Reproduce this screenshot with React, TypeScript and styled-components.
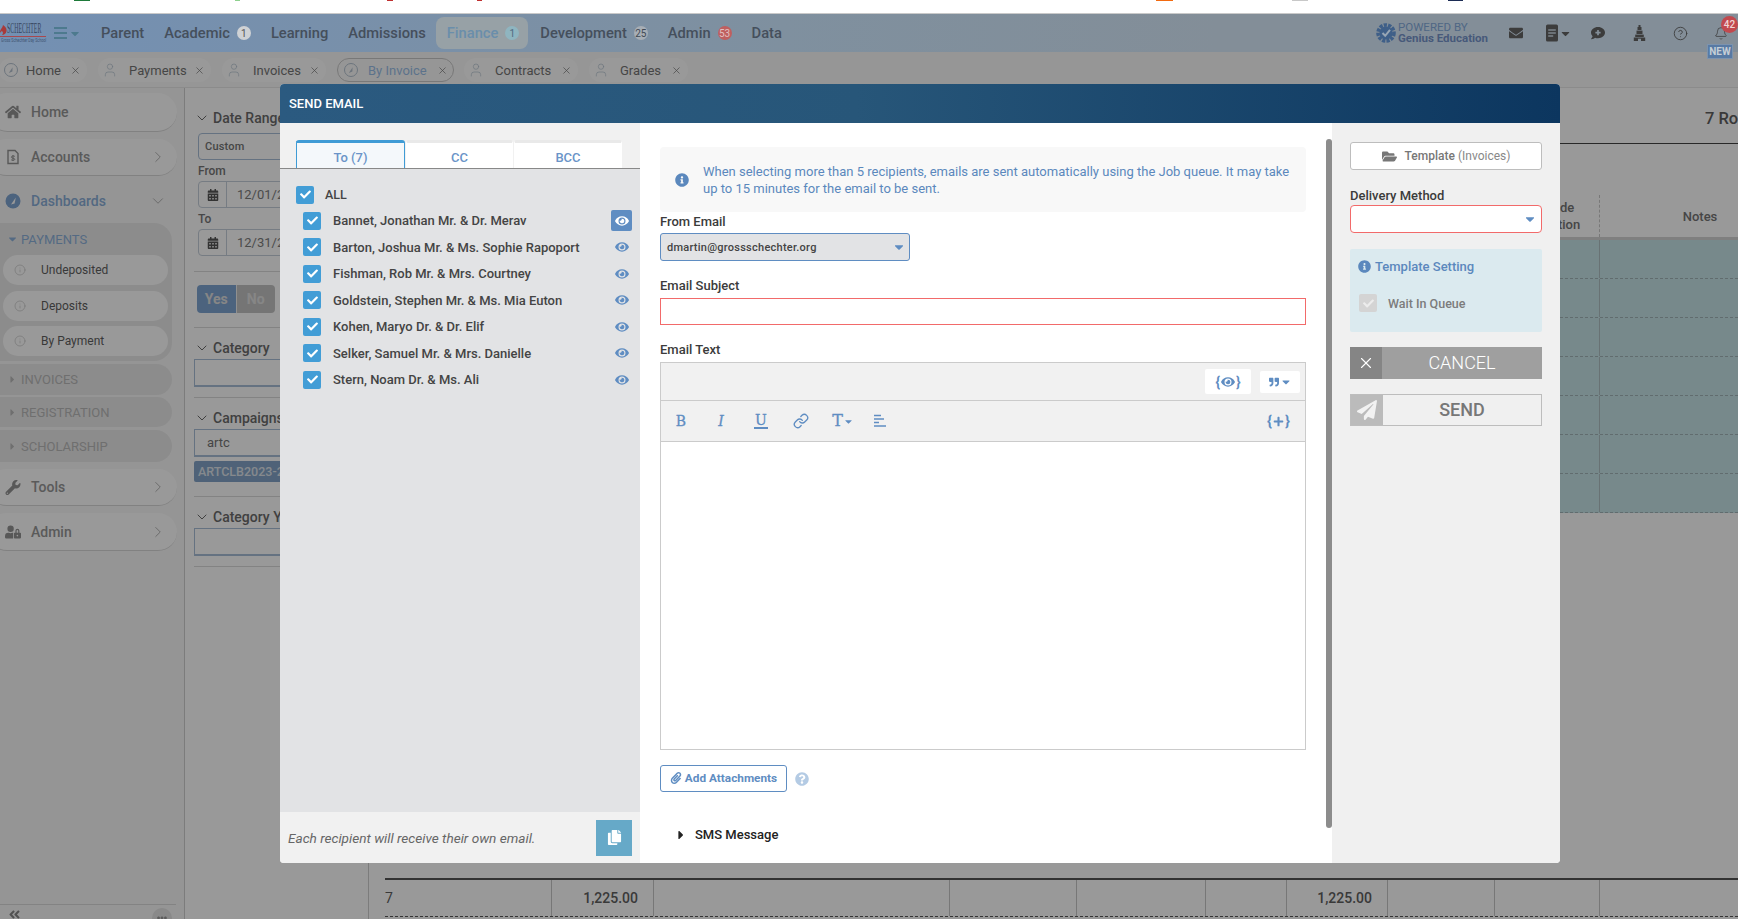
import React from "react";
import styled, { createGlobalStyle } from "styled-components";
import {
  FaHome, FaWrench, FaUserLock, FaCheck, FaEye, FaEnvelope, FaInfoCircle, FaFolderOpen,
  FaPaperPlane, FaPaperclip, FaCopy, FaQuestionCircle, FaCalendarAlt, FaCaretDown, FaCaretRight,
  FaQuoteRight, FaCommentMedical, FaPlus, FaAngleDoubleLeft, FaEllipsisH,
} from "react-icons/fa";
import { ChevronRight, ChevronDown, Info, User, CircleHelp, Bell, Link as LinkIcon, X } from "lucide-react";

const Global = createGlobalStyle`
  html, body { margin: 0; padding: 0; background: #fff; overflow: hidden; }
  * { box-sizing: border-box; }
  body { font-family: Roboto, "Liberation Sans", sans-serif; }
`;

const Page = styled.div`
  position: relative; width: 1738px; height: 919px; overflow: hidden; background: #fff;
  display: flex; flex-direction: column;
`;
const TopStrip = styled.div`
  height: 14px; flex: none; background: #fff; display: flex; align-items: flex-start;
  border-bottom: 1px solid #c9c9c9;
`;
const Mark = styled.i<{ $left: number; $w: number; $c: string }>`
  display: block; height: 1px; width: ${(p) => p.$w}px; margin-left: ${(p) => p.$left}px; background: ${(p) => p.$c};
`;
const Header = styled.header`
  position: relative; z-index: 2;
  height: 38px; flex: none; display: flex; align-items: center;
  background: linear-gradient(90deg, #7390b3 0%, #7f909f 45%, #838e98 70%, #838e98 100%);
`;
const Logo = styled.div`
  position: relative; width: 46px; flex: none; height: 20px; padding-left: 7px;
`;
const Flame = styled.svg`
  position: absolute; left: 0; top: 2px; width: 7px; height: 10px;
`;
const LogoName = styled.div`
  font: 400 14px/12px "Liberation Serif", serif; color: #37475f; transform: scaleX(.42); transform-origin: left top; white-space: nowrap; height: 12px;
`;
const LogoLine = styled.div`
  height: 1px; background: #a8484e; margin: 1px 0 1px -7px;
`;
const LogoSub = styled.div`
  font: 400 5px/5px Roboto, sans-serif; color: #3f5472; white-space: nowrap; transform: scaleX(.72); transform-origin: left top; margin-left: -6px;
`;
const Burger = styled.span`
  width: 13px; height: 12px; margin-left: 8px; flex: none;
  border-top: 2px solid #4d7a8e; border-bottom: 2px solid #4d7a8e; position: relative;
  &::after { content: ""; position: absolute; left: 0; right: 0; top: 3px; height: 2px; background: #4d7a8e; }
`;
const BurgerCaret = styled.span`
  color: #4d7a8e; display: flex; margin: 0 10px 0 2px; width: 12px;
`;
const Nav = styled.nav`
  display: flex; align-items: center; height: 100%;
`;
const NavItem = styled.a<{ $active?: boolean }>`
  display: flex; align-items: center; height: 32px; font-size: 14.7px; font-weight: 500; white-space: nowrap;
  color: ${(p) => (p.$active ? "#6a8eab" : "#454f5c")};
  background: ${(p) => (p.$active ? "#97a1a6" : "transparent")};
  border-radius: 8px; padding: ${(p) => (p.$active ? "0 9px 0 11px" : "0 10px")};
  margin-right: ${(p) => (p.$active ? "2px" : "0")};
`;
const NavBadge = styled.b<{ $c: string; $fg: string }>`
  display: inline-flex; align-items: center; justify-content: center; width: 14px; height: 14px; border-radius: 50%;
  margin-left: 7px; font-size: 10px; font-weight: 400; background: ${(p) => p.$c}; color: ${(p) => p.$fg};
`;
const HeadRight = styled.div`
  margin-left: auto; display: flex; align-items: center; height: 100%; position: relative; width: 362px;
`;
const Gear = styled.svg`
  width: 20px; height: 20px; flex: none;
`;
const Powered = styled.div`
  display: flex; flex-direction: column; margin-left: 2px; width: 111px; color: #4f6785;
  font-size: 11.5px; line-height: 11px; white-space: nowrap;
  b { font-weight: 700; color: #47597a; font-size: 11.5px; }
`;
const HeadIcon = styled.span<{ $w: number }>`
  width: ${(p) => p.$w}px; display: flex; align-items: center; flex: none; color: #3c3c3c;
`;
const BellBadge = styled.span`
  position: absolute; left: 345px; top: 2px; width: 17px; height: 17px; border-radius: 50%;
  background: #c2494e; color: #f0d4d4; font-size: 10px; font-weight: 500;
  display: flex; align-items: center; justify-content: center;
`;
const NewTag = styled.span`
  position: absolute; left: 331px; top: 30px; width: 26px; height: 15px; background: #587aa4; color: #c5ced6;
  font-size: 10px; font-weight: 700; display: flex; align-items: center; justify-content: center; z-index: 1;
  border: 1px solid #7c93ae;
`;
const TabBar = styled.div`
  height: 36px; flex: none; background: #fbfbfb; display: flex; align-items: center; padding-top: 1px;
  border-bottom: 1px solid #e8e8e8;
`;
const PageTab = styled.div<{ $active?: boolean; $ml: number; $w: number; $gap: number }>`
  width: ${(p) => p.$w}px; margin-left: ${(p) => p.$ml}px; height: 24px; display: flex; align-items: center; flex: none;
  border-radius: 12px; padding-left: ${(p) => (p.$active ? 5 : 3)}px; font-size: 13px; white-space: nowrap;
  border: 1px solid ${(p) => (p.$active ? "#c8c8c8" : "transparent")};
  background: ${(p) => (p.$active ? "transparent" : "#ffffff")};
  color: ${(p) => (p.$active ? "#9abfe8" : "#757575")};
  svg { flex: none; color: #b4c2d0; }
  span { margin-left: ${(p) => p.$gap}px; }
  svg:last-child { margin-left: auto; margin-right: 5px; color: #757575; }
`;
const Body = styled.div`
  flex: 1; display: flex; min-height: 0;
`;
const Sidebar = styled.aside`
  width: 185px; flex: none; border-right: 1px solid #cfcfcf; background: #f9f9f9; padding-top: 5px; display: flex; flex-direction: column;
`;
const SideLink = styled.div<{ $h: number; $open?: boolean; $mt?: number }>`
  height: ${(p) => p.$h}px; margin: ${(p) => p.$mt || 0}px 7px 7px -12px; padding: ${(p) => (p.$open ? "3px" : "0")} 10px 0 17px; display: flex; align-items: center; flex: none;
  border-radius: 20px; background: ${(p) => (p.$open ? "transparent" : "#fff")}; border-bottom: ${(p) => (p.$open ? "0" : "1px solid #d8d8d8")};
  font-size: 14px; font-weight: 500; color: ${(p) => (p.$open ? "#8aaed8" : "#979797")};
  span { margin-left: 10px; flex: 1; }
  & > svg:first-child { width: 16px; flex: none; color: #939393; }
  & > svg:last-child { color: #999; }
`;
const SubGroup = styled.div<{ $h: number; $mt: number }>`
  height: ${(p) => p.$h}px; margin: ${(p) => p.$mt}px 0 0 -1px; width: 173px; background: #eaeaea; border-radius: 0 18px 18px 0;
  padding: 0 4px; flex: none;
`;
const SubHead = styled.div<{ $open?: boolean; $h: number }>`
  height: ${(p) => p.$h}px; display: flex; align-items: center; font-size: 13px; color: ${(p) => (p.$open ? "#8db1da" : "#b9b9b9")};
  padding-left: 4px;
  svg { margin-right: 3px; width: 11px; flex: none; }
`;
const SubItem = styled.div`
  height: 30px; margin-bottom: 5.5px; border-radius: 15px; background: #fff; display: flex; align-items: center; padding-left: 11px;
  font-size: 12px; color: #5f5f5f;
  svg { color: #b0b0b0; margin-right: 15px; }
`;
const SideFoot = styled.div`
  margin-top: auto; height: 15px; width: 176px; border-top: 1px solid #dadada; display: flex; justify-content: space-between; padding: 3px 4px 0 8px;
  color: #888; flex: none;
`;
const DotsBtn = styled.span`
  width: 20px; height: 20px; border-radius: 50%; background: #e4e4e4; display: flex; align-items: center; justify-content: center; color: #9a9a9a;
`;
const Filters = styled.section`
  width: 184px; flex: none; padding: 22px 0 0 9px; border-right: 1px solid #cfcfcf; overflow: hidden; background: #fff;
`;
const FilterTitle = styled.div<{ $mt?: number }>`
  display: flex; align-items: center; height: 16px; font-size: 14px; font-weight: 500; color: #6b6b6b; white-space: nowrap; margin-top: ${(p) => p.$mt || 0}px;
  svg { margin-right: 3px; flex: none; }
`;
const FieldBox = styled.div<{ $mt?: number }>`
  width: 220px; height: 28px; margin-top: ${(p) => p.$mt ?? 3}px; border: 1px solid #a9bfd8; border-bottom-width: 2px;
  display: flex; align-items: center; padding-left: 12px; color: #757575; font-size: 13px;
`;
const SelectBox = styled(FieldBox)`
  margin-left: 4px; border-radius: 4px; padding-left: 6px; font-size: 11px; font-weight: 500; height: 27px; border-bottom-width: 1px; letter-spacing: .2px;
`;
const SmallLabel = styled.div`
  font-size: 12px; font-weight: 500; color: #777; line-height: 14px; margin: 4px 0 0 4px;
`;
const DateBox = styled.div`
  width: 220px; height: 27px; margin: 3px 0 0 4px; border: 1px solid #c5cfdb; border-radius: 4px; display: flex; align-items: center; font-size: 13px; color: #7d7d7d;
  span { width: 28px; height: 100%; flex: none; border-right: 1px solid #c5cfdb; display: flex; align-items: center; justify-content: center; color: #555; margin-right: 10px; }
`;
const Rule = styled.div<{ $mt: number }>`
  height: 1px; width: 180px; background: #dbdbdb; margin-top: ${(p) => p.$mt}px;
`;
const Toggle = styled.div`
  display: flex; margin: 13px 0 0 3px; height: 28px; width: 78px; border-radius: 4px; overflow: hidden; font-size: 14px; font-weight: 700;
`;
const ToggleOpt = styled.span<{ $on?: boolean }>`
  flex: 1; display: flex; align-items: center; justify-content: center; color: #e0e0e0;
  background: ${(p) => (p.$on ? "#7fa5d2" : "#c4c4c4")}; border-left: ${(p) => (p.$on ? "0" : "1px solid #f0f0f0")};
`;
const Chip = styled.div`
  height: 21px; width: 220px; margin-top: 4px; background: #84a4c8; color: #dfe5ec; font-size: 12.5px; font-weight: 500; border-radius: 2px; display: flex; align-items: center; padding-left: 4px;
`;
const Main = styled.main`
  flex: 1; min-width: 0; display: flex; flex-direction: column; padding-left: 16px; background: #fff; overflow: hidden;
`;
const MainTop = styled.div`
  height: 56px; flex: none; border-bottom: 1px solid #444; display: flex; justify-content: flex-end; padding: 21px 0 0 0; margin-left: -16px;
  font-size: 16.5px; font-weight: 500; color: #606060; overflow: hidden;
`;
const RowsLabel = styled.span`
  width: 33px; white-space: nowrap;
`;
const COLS = "167px 102px 296px 127px 129px 81px 101px 107px 105px 200px";
const HeadRow = styled.div`
  margin-top: 51px; height: 45px; flex: none; display: grid; grid-template-columns: ${COLS}; border-bottom: 3px solid #d4d4d4; background: #fff;
`;
const HeadCell = styled.div`
  display: flex; align-items: center; justify-content: center; text-align: center; font-size: 13px; font-weight: 500; color: #757575; line-height: 17px; border-right: 1px dashed #c8c8c8;
  &:last-child { border-right: 0; }
`;
const DataRow = styled.div`
  height: 39px; flex: none; display: grid; grid-template-columns: ${COLS}; background: #c6e4e8; border-bottom: 1px dashed #a2b5b8;
`;
const DataCell = styled.div`
  border-right: 1px solid #aebfc2;
  &:last-child { border-right: 0; }
`;
const TotalRow = styled.div`
  margin-top: auto; height: 39px; flex: none; display: grid; grid-template-columns: ${COLS}; border-top: 2px solid #555; border-bottom: 1px dashed #555; margin-bottom: 2px;
`;
const TotalCell = styled.div<{ $right?: boolean; $bold?: boolean }>`
  border-right: 1px solid #c6c6c6; display: flex; align-items: center; font-size: 14px; color: #606060; font-weight: ${(p) => (p.$bold ? 500 : 400)};
  justify-content: ${(p) => (p.$right ? "flex-end" : "flex-start")}; padding-right: ${(p) => (p.$right ? "15px" : "0")};
  &:last-child { border-right: 0; }
`;
const Overlay = styled.div`
  position: absolute; left: 0; right: 0; top: 52px; bottom: 0; background: rgba(0, 0, 0, 0.4); z-index: 1;
`;
const Modal = styled.div`
  position: absolute; z-index: 3; left: 280px; top: 84px; width: 1280px; height: 779px; display: flex; flex-direction: column;
  border-radius: 4px; overflow: hidden; background: #fff;
`;
const ModalTitle = styled.div`
  height: 39px; flex: none; display: flex; align-items: center; padding-left: 9px; color: #fff; font-size: 13px; font-weight: 500;
  background: linear-gradient(90deg, #2b5a80 0%, #275679 45%, #0c365f 100%);
`;
const ModalBody = styled.div`
  flex: 1; display: flex; min-height: 0;
`;
const Left = styled.div`
  width: 360px; flex: none; display: flex; flex-direction: column; background: #e2e3e5;
`;
const TabsRow = styled.div`
  height: 46px; flex: none; background: #f1f1f1; padding: 17px 0 0 16px; display: flex; gap: 1px; border-bottom: 1px solid #888;
`;
const ToTab = styled.div<{ $active?: boolean; $w: number }>`
  width: ${(p) => p.$w}px; height: 28px; display: flex; align-items: center; justify-content: center; padding-top: 4px;
  font-size: 13px; font-weight: 500; color: #6a94c8; background: ${(p) => (p.$active ? "#f4f8fb" : "#fff")};
  border-top: 3px solid ${(p) => (p.$active ? "#3f9bd5" : "#e9e9e9")};
  border-left: 1px solid ${(p) => (p.$active ? "#3f9bd5" : "transparent")}; border-right: 1px solid ${(p) => (p.$active ? "#3f9bd5" : "transparent")};
  border-radius: 3px 3px 0 0; margin-bottom: -1px;
`;
const List = styled.div`
  flex: 1; padding-top: 12.5px;
`;
const AllRow = styled.div`
  height: 26px; display: flex; align-items: center; padding-left: 16px; font-size: 12.5px; font-weight: 500; color: #444;
`;
const NameRow = styled.div`
  height: 26.5px; display: flex; align-items: center; padding: 0 8px 0 23px; font-size: 13px; font-weight: 500; color: #444; white-space: nowrap;
`;
const Check = styled.span<{ $gap: number; $off?: boolean }>`
  width: 18px; height: 18px; border-radius: 2px; flex: none; margin-right: ${(p) => p.$gap}px; display: flex; align-items: center; justify-content: center;
  background: ${(p) => (p.$off ? "#d4d4d4" : "#429dd6")}; color: ${(p) => (p.$off ? "#ececec" : "#fff")};
`;
const EyeBtn = styled.span<{ $on?: boolean }>`
  margin-left: auto; width: 21px; height: 21px; border-radius: 2px; display: flex; align-items: center; justify-content: center; flex: none;
  background: ${(p) => (p.$on ? "#5f8dc2" : "transparent")}; color: ${(p) => (p.$on ? "#fff" : "#5f8dc2")};
`;
const LeftFoot = styled.div`
  height: 51px; flex: none; background: #f1f1f1; display: flex; align-items: center; padding: 0 8px; font-size: 13.6px; font-style: italic; color: #666; justify-content: space-between;
`;
const CopyBtn = styled.span`
  width: 36px; height: 36px; background: #66a9c8; color: #fff; display: flex; align-items: center; justify-content: center;
`;
const Center = styled.div`
  width: 692px; flex: none; position: relative; padding: 24px 26px 0 20px; background: #fff;
`;
const ScrollThumb = styled.div`
  position: absolute; right: 0; top: 16px; width: 6px; height: 689px; background: #8c8c8c; border-radius: 3px;
`;
const InfoBox = styled.div`
  height: 65px; background: #f8f8f8; border-radius: 4px; display: flex; align-items: center; padding: 0 12px 0 15px; color: #5b88bd; font-size: 13px; line-height: 17px;
  svg { flex: none; margin-right: 14px; }
`;
const FormLabel = styled.div<{ $mt: number }>`
  font-size: 13px; font-weight: 500; line-height: 16px; color: #3b3b3b; margin-top: ${(p) => p.$mt}px;
`;
const FromSelect = styled.div`
  width: 250px; height: 28px; margin-top: 3px; border: 1px solid #5f8dc2; border-radius: 3px; background: #e2e3e5; display: flex; align-items: center; padding: 0 3px 0 6px;
  font-size: 11px; font-weight: 500; letter-spacing: .25px; color: #444; justify-content: space-between;
  svg { color: #5f8dc2; }
`;
const Subject = styled.div`
  height: 27px; margin-top: 4px; border: 1px solid #f26a6a;
`;
const Editor = styled.div`
  height: 388px; margin-top: 4px; border: 1px solid #cbcbcb; display: flex; flex-direction: column;
`;
const EditorTop = styled.div`
  height: 38px; flex: none; background: #f1f1f1; border-bottom: 1px solid #cbcbcb; display: flex; justify-content: flex-end; align-items: center; padding: 0 5px 0 0; gap: 9px;
`;
const WhiteBtn = styled.span<{ $w: number; $h: number }>`
  width: ${(p) => p.$w}px; height: ${(p) => p.$h}px; background: #fff; border-radius: 2px; display: flex; align-items: center; justify-content: center; color: #5f8dc2; font-size: 14px; font-weight: 700; gap: 1px;
`;
const EditorBar = styled.div`
  height: 41px; flex: none; background: #f1f1f1; border-bottom: 1px solid #cbcbcb; display: flex; align-items: center; padding: 0 15px 0 0; color: #5f8dc2;
`;
const ToolGlyph = styled.span<{ $w: number; $italic?: boolean; $under?: boolean; $big?: boolean }>`
  width: ${(p) => p.$w}px; flex: none; display: flex; align-items: center; justify-content: center; height: 18px;
  font: ${(p) => (p.$italic ? "italic " : "")}400 ${(p) => (p.$big ? 16 : 14)}px/16px "DejaVu Serif", serif; color: #5f8dc2;
  -webkit-text-stroke: .3px #5f8dc2;
  span { ${(p) => (p.$under ? "border-bottom: 2px solid #5f8dc2; line-height: 13px; padding: 0 1px;" : "")} }
`;
const AlignIcon = styled.svg`
  width: 14px; height: 14px; margin-left: 8px; flex: none;
`;
const VarBtn = styled.span`
  margin-left: auto; display: flex; align-items: center; gap: 1px; font-size: 15px; font-weight: 700; color: #5f8dc2;
`;
const AttachRow = styled.div`
  display: flex; align-items: center; margin-top: 15px;
`;
const AttachBtn = styled.div`
  width: 127px; height: 27px; border: 1px solid #5f8dc2; border-radius: 3px; display: flex; align-items: center; justify-content: center; gap: 3px; padding-bottom: 1px; font-size: 11.8px; font-weight: 700; color: #5f8dc2; white-space: nowrap;
`;
const HelpDot = styled.span`
  margin-left: 8px; color: #b4cbe4; display: flex;
`;
const SmsRow = styled.div`
  display: flex; align-items: center; margin: 35px 0 0 14px; font-size: 13px; font-weight: 500; color: #222;
  svg { margin-right: 7px; }
`;
const Right = styled.div`
  flex: 1; background: #f0f0f0; padding: 19px 18px 0;
`;
const TemplateBtn = styled.div`
  height: 28px; background: #fff; border: 1px solid #bdbdbd; border-radius: 3px; display: flex; align-items: center; justify-content: center; gap: 8px; font-size: 12px; font-weight: 500; color: #777;
  svg { color: #777; }
  em { font-style: normal; font-weight: 400; color: #888; margin-left: -5px; }
`;
const DeliverSelect = styled.div`
  height: 28px; margin-top: 1px; background: #fff; border: 1px solid #f26a6a; border-radius: 4px; display: flex; align-items: center; justify-content: flex-end; padding-right: 4px; color: #5f8dc2;
`;
const Setting = styled.div`
  height: 83px; margin-top: 16px; background: #dbeaef; border-radius: 2px; padding: 9px 8px;
`;
const SettingHead = styled.div`
  display: flex; align-items: center; font-size: 13px; font-weight: 500; color: #5b88bd; gap: 4px; height: 16px;
`;
const SettingRow = styled.div`
  display: flex; align-items: center; margin: 20px 0 0 1px; font-size: 12.5px; font-weight: 500; color: #7c7c7c;
`;
const ActionBtn = styled.div<{ $cancel?: boolean }>`
  height: 32px; margin-top: 15px; display: flex; font-size: 18px; font-weight: ${(p) => (p.$cancel ? 300 : 500)};
  background: ${(p) => (p.$cancel ? "#9f9f9f" : "#f0f0f0")}; color: ${(p) => (p.$cancel ? "#fff" : "#777")};
  border: ${(p) => (p.$cancel ? "0" : "1px solid #bdbdbd")};
`;
const ActionIcon = styled.span<{ $cancel?: boolean }>`
  width: 32px; flex: none; display: flex; align-items: center; justify-content: center; color: ${(p) => (p.$cancel ? "#fff" : "#f2f2f2")};
  background: ${(p) => (p.$cancel ? "#858585" : "#bbbbbb")};
`;
const ActionText = styled.span`
  flex: 1; display: flex; align-items: center; justify-content: center; padding-bottom: 2px;
`;

const marksA = [
  { left: 74, w: 16, c: "#1e7a3a" }, { left: 145, w: 5, c: "#8ed08e" }, { left: 147, w: 6, c: "#c03030" },
  { left: 84, w: 5, c: "#c03030" }, { left: 674, w: 17, c: "#f26a10" }, { left: 119, w: 16, c: "#c8c8c8" }, { left: 140, w: 15, c: "#1c2c55" },
];
const recipients = [
  "Bannet, Jonathan Mr. & Dr. Merav", "Barton, Joshua Mr. & Ms. Sophie Rapoport", "Fishman, Rob Mr. & Mrs. Courtney",
  "Goldstein, Stephen Mr. & Ms. Mia Euton", "Kohen, Maryo Dr. & Dr. Elif", "Selker, Samuel Mr. & Mrs. Danielle", "Stern, Noam Dr. & Ms. Ali",
];
const pageTabs = [
  { t: "Home", ml: -1, w: 88, gap: 7, gauge: true }, { t: "Payments", ml: 11, w: 113, gap: 11 }, { t: "Invoices", ml: 11, w: 104, gap: 11 },
  { t: "By Invoice", ml: 11, w: 117, gap: 9, gauge: true, active: true }, { t: "Contracts", ml: 10, w: 114, gap: 11 }, { t: "Grades", ml: 11, w: 99, gap: 11 },
];
const colKeys = [0, 1, 2, 3, 4, 5, 6, 7, 8, 9];

const Gauge = ({ size = 16, color = "#b4c2d0" }: { size?: number; color?: string }) => (
  <svg width={size} height={size} viewBox="0 0 16 16" fill="none">
    <circle cx="8" cy="8" r="6.5" stroke={color} />
    <path d="M5.8 11 L9.6 5.2 L9.4 9.6 Z" fill={color} />
  </svg>
);
const DashIcon = () => (
  <svg width="16" height="16" viewBox="0 0 16 16">
    <circle cx="8" cy="8" r="7.5" fill="#7fa5d2" />
    <path d="M6 11.5 L10.8 4.4 L9.6 10.6 Z" fill="#fff" />
  </svg>
);
const AccountsIcon = () => (
  <svg width="16" height="16" viewBox="0 0 16 16" fill="none" stroke="#939393" strokeWidth="1.4">
    <path d="M3 1.5 H10 L13 4.5 V14.5 H3 Z" />
    <path d="M8 6 V12 M9.8 7.4 C8.8 6.6 6.4 6.8 6.4 8.2 C6.4 9.6 9.8 8.8 9.8 10.3 C9.8 11.5 7.2 11.6 6.2 10.8" strokeWidth="1" />
  </svg>
);
const BookIcon = () => (
  <svg width="14" height="18" viewBox="0 0 14 18">
    <path d="M1 2 a1.6 1.6 0 0 1 1.6-1.6 h8.8 A1.6 1.6 0 0 1 13 2 v14 a1.6 1.6 0 0 1-1.6 1.6 H2.6 A1.6 1.6 0 0 1 1 16 Z" fill="#3c3c3c" />
    <path d="M3.2 6 h7.6 M3.2 9 h7.6 M3.2 12 h5" stroke="#9aa6b0" strokeWidth="1.2" />
  </svg>
);
const TowerIcon = () => (
  <svg width="13" height="16" viewBox="0 0 13 16" fill="#3c3c3c">
    <path d="M5.5 0 h2 v2 h1 v3 h-4 v-3 h1 Z" />
    <path d="M3.5 5.6 h6 v3.4 h-6 Z" />
    <path d="M2.2 9.6 h8.6 V12 H2.2 Z" />
    <path d="M0.8 12.6 h11.4 V16 H8 v-2.2 H5 V16 H0.8 Z" />
  </svg>
);

export default function App() {
  return (
    <Page>
      <Global />
      <TopStrip>
        {marksA.map((m, i) => <Mark key={i} $left={m.left} $w={m.w} $c={m.c} />)}
      </TopStrip>
      <Header>
        <Logo>
          <Flame viewBox="0 0 7 10"><path d="M3 0 C6 2 7 4 6.4 6.6 C6 8.8 4 10 2 10 C3.6 8.4 3 6.6 1.6 5.8 C1.4 7 0.6 7.6 0 7.4 C-.2 4.6 2.6 3 3 0 Z" fill="#a83a3a" /></Flame>
          <LogoName>SCHECHTER</LogoName>
          <LogoLine />
          <LogoSub>Gross Schechter Day School</LogoSub>
        </Logo>
        <Burger />
        <BurgerCaret><FaCaretDown size={13} /></BurgerCaret>
        <Nav>
          <NavItem>Parent</NavItem>
          <NavItem>Academic<NavBadge $c="#cfd2d5" $fg="#555">1</NavBadge></NavItem>
          <NavItem>Learning</NavItem>
          <NavItem>Admissions</NavItem>
          <NavItem $active>Finance<NavBadge $c="#8fb5c0" $fg="#4f6a80">1</NavBadge></NavItem>
          <NavItem>Development<NavBadge $c="#a7aeb5" $fg="#3f4a55">25</NavBadge></NavItem>
          <NavItem>Admin<NavBadge $c="#bf5f5f" $fg="#e2bfbf">53</NavBadge></NavItem>
          <NavItem>Data</NavItem>
        </Nav>
        <HeadRight>
          <Gear viewBox="0 0 20 20">
            <circle cx="10" cy="10" r="8" fill="none" stroke="#3f5f88" strokeWidth="3.6" strokeDasharray="3.2 1.2" />
            <circle cx="10" cy="10" r="6.6" fill="#3f5f88" />
            <path d="M6.5 10 L9.2 12.8 L14 6.8" stroke="#98a6b4" strokeWidth="2" fill="none" />
          </Gear>
          <Powered>POWERED BY<b>Genius Education</b></Powered>
          <HeadIcon $w={36}><FaEnvelope size={14} /></HeadIcon>
          <HeadIcon $w={46}><BookIcon /><FaCaretDown size={13} /></HeadIcon>
          <HeadIcon $w={42}><FaCommentMedical size={14} /></HeadIcon>
          <HeadIcon $w={40}><TowerIcon /></HeadIcon>
          <HeadIcon $w={41}><CircleHelp size={15} strokeWidth={1.4} /></HeadIcon>
          <HeadIcon $w={14}><Bell size={15} strokeWidth={1.3} /></HeadIcon>
          <BellBadge>42</BellBadge>
          <NewTag>NEW</NewTag>
        </HeadRight>
      </Header>
      <TabBar>
        {pageTabs.map((t) => (
          <PageTab key={t.t} $ml={t.ml} $w={t.w} $gap={t.gap} $active={t.active}>
            {t.gauge ? <Gauge /> : <User size={16} strokeWidth={1} />}
            <span>{t.t}</span>
            <X size={11} strokeWidth={1.5} />
          </PageTab>
        ))}
      </TabBar>
      <Body>
        <Sidebar>
          <SideLink $h={39}><FaHome size={16} /><span>Home</span></SideLink>
          <SideLink $h={37}><AccountsIcon /><span>Accounts</span><ChevronRight size={18} strokeWidth={1} /></SideLink>
          <SideLink $h={33} $open><DashIcon /><span>Dashboards</span><ChevronDown size={18} strokeWidth={1} /></SideLink>
          <SubGroup $h={138} $mt={0}>
            <SubHead $open $h={32}><FaCaretDown size={12} />PAYMENTS</SubHead>
            <SubItem><Info size={12} strokeWidth={1} />Undeposited</SubItem>
            <SubItem><Info size={12} strokeWidth={1} />Deposits</SubItem>
            <SubItem><Info size={12} strokeWidth={1} />By Payment</SubItem>
          </SubGroup>
          <SubGroup $h={31} $mt={3}><SubHead $h={31}><FaCaretRight size={11} />INVOICES</SubHead></SubGroup>
          <SubGroup $h={30} $mt={2}><SubHead $h={30}><FaCaretRight size={11} />REGISTRATION</SubHead></SubGroup>
          <SubGroup $h={32} $mt={3}><SubHead $h={32}><FaCaretRight size={11} />SCHOLARSHIP</SubHead></SubGroup>
          <SideLink $h={37} $mt={7}><FaWrench size={15} /><span>Tools</span><ChevronRight size={18} strokeWidth={1} /></SideLink>
          <SideLink $h={38}><FaUserLock size={16} /><span>Admin</span><ChevronRight size={18} strokeWidth={1} /></SideLink>
          <SideFoot><FaAngleDoubleLeft size={13} /><DotsBtn><FaEllipsisH size={10} /></DotsBtn></SideFoot>
        </Sidebar>
        <Filters>
          <FilterTitle><ChevronDown size={16} strokeWidth={1.5} />Date Range</FilterTitle>
          <SelectBox $mt={7}>Custom</SelectBox>
          <SmallLabel>From</SmallLabel>
          <DateBox><span><FaCalendarAlt size={12} /></span>12/01/2023</DateBox>
          <SmallLabel>To</SmallLabel>
          <DateBox><span><FaCalendarAlt size={12} /></span>12/31/2023</DateBox>
          <Rule $mt={15} />
          <Toggle><ToggleOpt $on>Yes</ToggleOpt><ToggleOpt>No</ToggleOpt></Toggle>
          <Rule $mt={14} />
          <FilterTitle $mt={12}><ChevronDown size={16} strokeWidth={1.5} />Category</FilterTitle>
          <FieldBox $mt={3} />
          <Rule $mt={10} />
          <FilterTitle $mt={12}><ChevronDown size={16} strokeWidth={1.5} />Campaigns</FilterTitle>
          <FieldBox $mt={3}>artc</FieldBox>
          <Chip>ARTCLB2023-24</Chip>
          <Rule $mt={14} />
          <FilterTitle $mt={12}><ChevronDown size={16} strokeWidth={1.5} />Category Year</FilterTitle>
          <FieldBox $mt={3} />
          <Rule $mt={10} />
        </Filters>
        <Main>
          <MainTop><RowsLabel>7 Rows</RowsLabel></MainTop>
          <HeadRow>
            {colKeys.map((k) => (
              <HeadCell key={k}>{k === 8 ? <>Fee Code<br />Description</> : k === 9 ? "Notes" : ""}</HeadCell>
            ))}
          </HeadRow>
          {[0, 1, 2, 3, 4, 5, 6].map((r) => (
            <DataRow key={r}>{colKeys.map((k) => <DataCell key={k} />)}</DataRow>
          ))}
          <TotalRow>
            {colKeys.map((k) => (
              <TotalCell key={k} $right={k === 1 || k === 6} $bold={k === 1 || k === 6}>
                {k === 0 ? "7" : k === 1 || k === 6 ? "1,225.00" : ""}
              </TotalCell>
            ))}
          </TotalRow>
        </Main>
      </Body>
      <Overlay />
      <Modal>
        <ModalTitle>SEND EMAIL</ModalTitle>
        <ModalBody>
          <Left>
            <TabsRow>
              <ToTab $active $w={109}>To (7)</ToTab>
              <ToTab $w={107}>CC</ToTab>
              <ToTab $w={108}>BCC</ToTab>
            </TabsRow>
            <List>
              <AllRow><Check $gap={11}><FaCheck size={11} /></Check>ALL</AllRow>
              {recipients.map((n, i) => (
                <NameRow key={n}>
                  <Check $gap={12}><FaCheck size={11} /></Check>{n}
                  <EyeBtn $on={i === 0}><FaEye size={14} /></EyeBtn>
                </NameRow>
              ))}
            </List>
            <LeftFoot>Each recipient will receive their own email.<CopyBtn><FaCopy size={15} /></CopyBtn></LeftFoot>
          </Left>
          <Center>
            <InfoBox>
              <FaInfoCircle size={14} />
              <span>When selecting more than 5 recipients, emails are sent automatically using the Job queue. It may take up to 15 minutes for the email to be sent.</span>
            </InfoBox>
            <FormLabel $mt={2}>From Email</FormLabel>
            <FromSelect>dmartin@grossschechter.org<FaCaretDown size={14} /></FromSelect>
            <FormLabel $mt={17}>Email Subject</FormLabel>
            <Subject />
            <FormLabel $mt={17}>Email Text</FormLabel>
            <Editor>
              <EditorTop>
                <WhiteBtn $w={46} $h={25}>{"{"}<FaEye size={14} />{"}"}</WhiteBtn>
                <WhiteBtn $w={40} $h={22}><FaQuoteRight size={10} /><FaCaretDown size={12} /></WhiteBtn>
              </EditorTop>
              <EditorBar>
                <ToolGlyph $w={40}>B</ToolGlyph>
                <ToolGlyph $w={40} $italic>I</ToolGlyph>
                <ToolGlyph $w={40} $under><span>U</span></ToolGlyph>
                <ToolGlyph $w={40}><LinkIcon size={16} strokeWidth={2} /></ToolGlyph>
                <ToolGlyph $w={44} $big>T<FaCaretDown size={11} /></ToolGlyph>
                <AlignIcon viewBox="0 0 14 14" stroke="#5f8dc2" strokeWidth="1.4">
                  <path d="M1 1.5 H8 M1 5 H11 M1 8.5 H6 M1 12 H13" />
                </AlignIcon>
                <VarBtn>{"{"}<FaPlus size={11} />{"}"}</VarBtn>
              </EditorBar>
            </Editor>
            <AttachRow>
              <AttachBtn><FaPaperclip size={12} />Add Attachments</AttachBtn>
              <HelpDot><FaQuestionCircle size={14} /></HelpDot>
            </AttachRow>
            <SmsRow><FaCaretRight size={14} />SMS Message</SmsRow>
            <ScrollThumb />
          </Center>
          <Right>
            <TemplateBtn><FaFolderOpen size={15} />Template <em>(Invoices)</em></TemplateBtn>
            <FormLabel $mt={18}>Delivery Method</FormLabel>
            <DeliverSelect><FaCaretDown size={14} /></DeliverSelect>
            <Setting>
              <SettingHead><FaInfoCircle size={13} />Template Setting</SettingHead>
              <SettingRow><Check $off $gap={11}><FaCheck size={11} /></Check>Wait In Queue</SettingRow>
            </Setting>
            <ActionBtn $cancel>
              <ActionIcon $cancel><X size={18} strokeWidth={1.5} /></ActionIcon>
              <ActionText>CANCEL</ActionText>
            </ActionBtn>
            <ActionBtn>
              <ActionIcon><FaPaperPlane size={20} /></ActionIcon>
              <ActionText>SEND</ActionText>
            </ActionBtn>
          </Right>
        </ModalBody>
      </Modal>
    </Page>
  );
}
